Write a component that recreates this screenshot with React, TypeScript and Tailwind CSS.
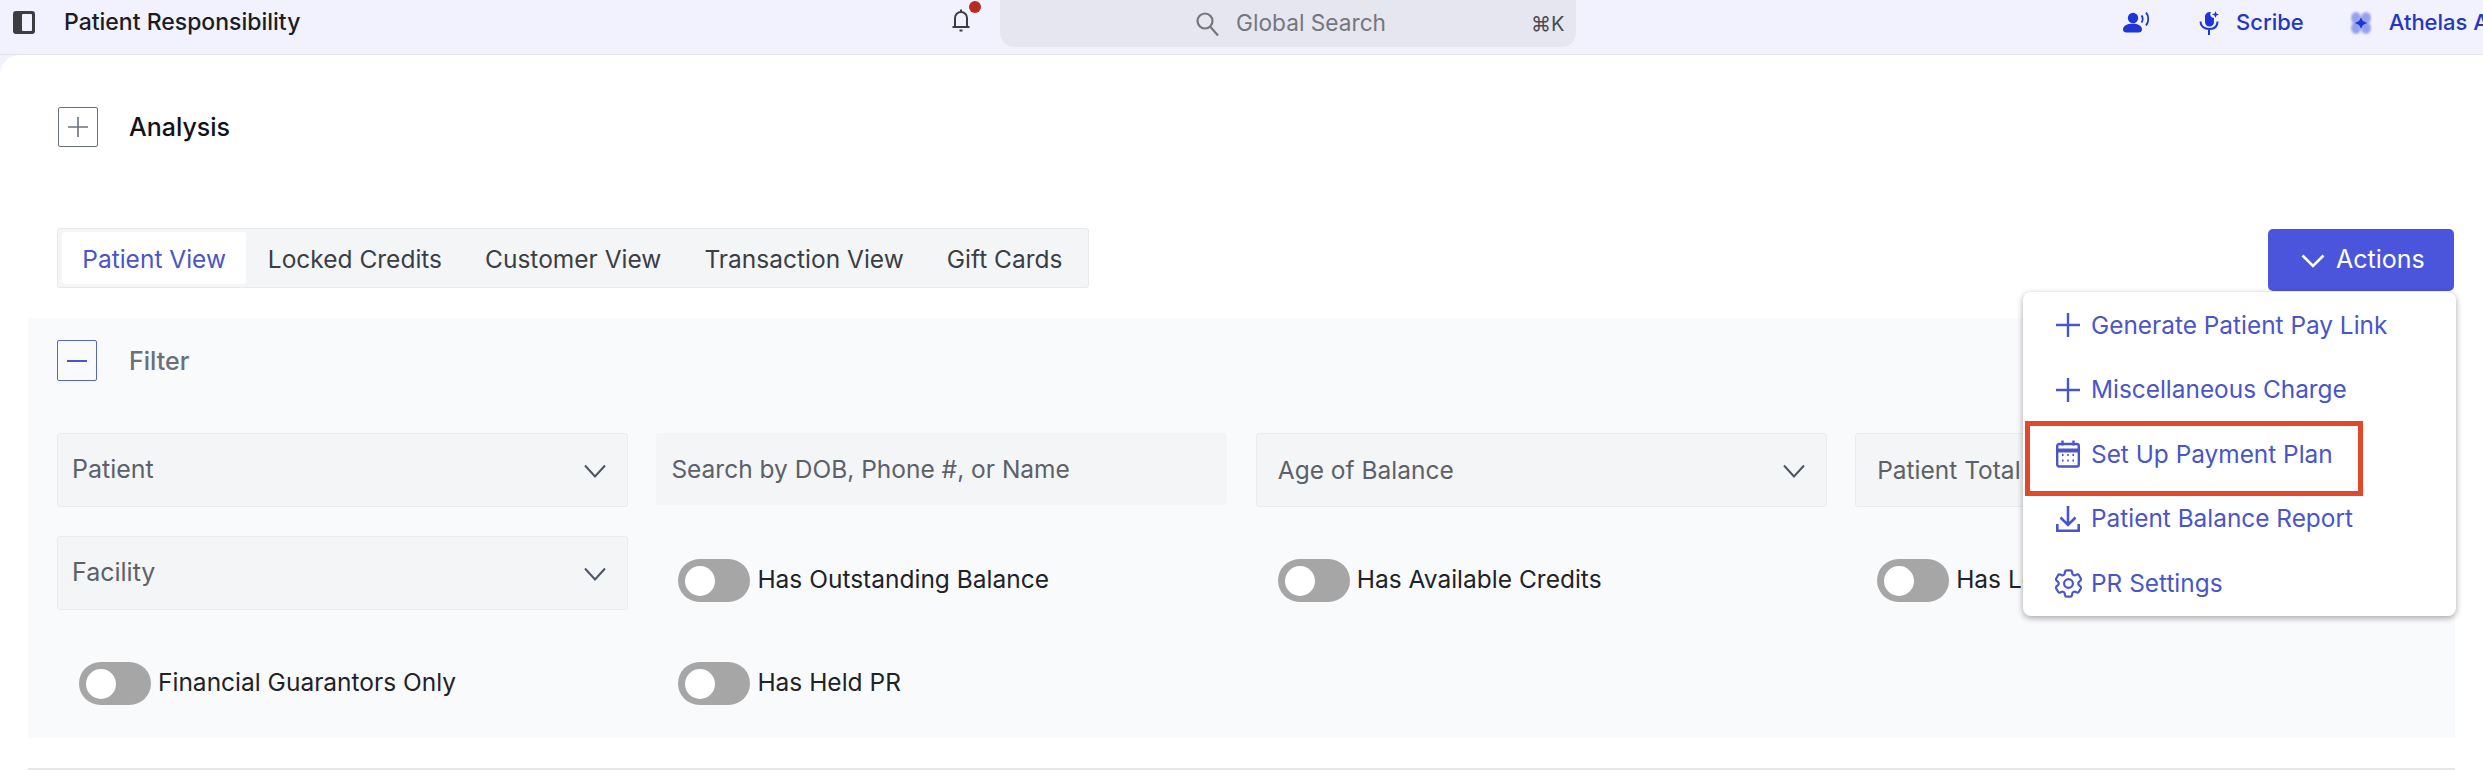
import React from "react";
import { HiOutlineCog6Tooth } from "react-icons/hi2";

const SelectBox = ({ label, first }: { label: string; first?: boolean }) => (
  <div
    className={`flex h-[74px] items-center justify-between rounded-[3px] border border-[#e9ebef] bg-[#f4f5f7] pr-[21px] text-[#5c6169] ${
      first ? "pl-[14px] text-[25px]" : "pl-[21px] text-[24.5px]"
    }`}
  >
    <span className="whitespace-nowrap">{label}</span>
    <svg width="22" height="14" viewBox="0 0 22 14" fill="none" stroke="#4b5563" strokeWidth="2" className="mt-[2px]">
      <path d="M1 1.5 11 12.5 21 1.5" />
    </svg>
  </div>
);

const Toggle = ({ label }: { label: string }) => (
  <div className="flex h-[74px] items-start pl-[22px] pt-[23px]">
    <div className="flex h-[43px] w-[72px] shrink-0 items-center rounded-full bg-[#a6a6a6] pl-[7px]">
      <div className="h-[30px] w-[30px] rounded-full bg-white" />
    </div>
    <span className="ml-[7px] mt-[2px] whitespace-nowrap text-[24.5px] leading-[36px] text-[#1f2328]">{label}</span>
  </div>
);

const PlusIcon = () => (
  <svg width="24" height="24" viewBox="0 0 24 24" fill="none" stroke="#4a55c8" strokeWidth="2.4">
    <path d="M12 0v24M0 12h24" />
  </svg>
);

const CalendarIcon = () => (
  <svg width="24" height="28" viewBox="0 0 24 28" fill="none" stroke="#4a55c8" strokeWidth="2.4">
    <rect x="1.2" y="4" width="21.6" height="22.5" rx="2" />
    <path d="M1.2 10.5h21.6" strokeWidth="4" />
    <path d="M6.5 0.5v5M17.5 0.5v5" />
    <path d="M6 15h1.6M11.2 15h1.6M16.4 15h1.6M6 20.5h1.6M11.2 20.5h1.6M16.4 20.5h1.6" strokeWidth="2" />
  </svg>
);

const DownloadIcon = () => (
  <svg width="24" height="26" viewBox="0 0 24 26" fill="none" stroke="#4a55c8" strokeWidth="2.6">
    <path d="M12 0v19M4.5 11.5 12 19l7.5-7.5" />
    <path d="M1.3 18v6.7h21.4V18" />
  </svg>
);

const menuItems = [
  { label: "Generate Patient Pay Link", icon: <PlusIcon /> },
  { label: "Miscellaneous Charge", icon: <PlusIcon /> },
  { label: "Set Up Payment Plan", icon: <CalendarIcon /> },
  { label: "Patient Balance Report", icon: <DownloadIcon /> },
  { label: "PR Settings", icon: <HiOutlineCog6Tooth size={35} color="#4a55c8" /> },
];

const tabs = ["Locked Credits", "Customer View", "Transaction View", "Gift Cards"];

export default function App() {
  return (
    <div className="h-[770px] w-[2483px] overflow-hidden bg-[#f1f2fd] font-['Inter',sans-serif]">
      <header className="flex h-[55px] items-start border-b border-[#e2e3ec]">
        <div className="flex w-[952px] shrink-0 items-center pt-[9px]">
          <div className="ml-[13px] flex h-[23px] w-[22px] justify-end rounded-[3px] bg-[#3b3d43] p-[3px]">
            <div className="h-full w-[10px] rounded-[1px] bg-[#f1f2fd]" />
          </div>
          <span className="ml-[29px] text-[23px] font-medium leading-[26px] text-[#1b1d22]">Patient Responsibility</span>
        </div>
        <div className="relative mt-[9px] w-[18px] shrink-0">
          <svg width="18" height="23" viewBox="0 0 18 23" fill="none" stroke="#3a3d44" strokeWidth="2">
            <path d="M9 0.5v3M3 17V9a6 6 0 0 1 12 0v8M0.5 18h17" />
            <path d="M7.5 21.5h3" />
          </svg>
          <div className="absolute left-[17px] top-[-8px] h-[12px] w-[12px] rounded-full bg-[#b82b22]" />
        </div>
        <div className="ml-[30px] flex h-[47px] w-[576px] shrink-0 items-center rounded-b-[14px] bg-[#e5e6f0]">
          <svg width="23" height="24" viewBox="0 0 23 24" fill="none" stroke="#75767d" strokeWidth="2.2" className="ml-[196px]">
            <circle cx="9" cy="9" r="7.5" />
            <path d="M14.5 15 22 23.5" />
          </svg>
          <span className="ml-[17px] text-[22.7px] text-[#75767d]">Global Search</span>
          <span className="ml-[145px] whitespace-nowrap text-[20px] text-[#4a4b52]">⌘K</span>
        </div>
        <div className="ml-[547px] flex shrink-0 items-center whitespace-nowrap pt-[6px] text-[22px] font-medium text-[#2437c4]">
          <svg width="27" height="21" viewBox="0 0 27 21" fill="#1f35d6">
            <circle cx="10" cy="6" r="5.2" />
            <path d="M0 17.5c0-4 4-5.8 9.5-5.8S19 13.5 19 17.5c0 2-1.4 3-3.5 3h-12C1.4 20.5 0 19.5 0 17.5z" />
            <path d="M18.5 3.5c1.6 1.6 1.6 5.4 0 7M23 0.5c3 3 3 10 0 13" fill="none" stroke="#1f35d6" strokeWidth="1.8" />
          </svg>
          <svg width="20" height="24" viewBox="0 0 20 24" fill="#1f35d6" className="ml-[49px]">
            <path d="M6 5a4.5 4.5 0 0 1 6-3.8c-1 1.4-1 3 0 4.3 1 1 2 1.5 3 1.5V11a4.5 4.5 0 0 1-9 0z" />
            <path d="M16.5 0l.9 2.6 2.6.9-2.6.9-.9 2.6-.9-2.6-2.6-.9 2.6-.9z" />
            <path d="M1.5 10.5c0 4.7 3.5 7.5 9 7.5s8-2.8 8-7.500M10 18v6" fill="none" stroke="#1f35d6" strokeWidth="2" />
          </svg>
          <span className="ml-[17px]">Scribe</span>
          <svg width="22" height="24" viewBox="0 0 22 24" className="ml-[46px]">
            <g fill="#6f80e8" opacity="0.7" className="blur-[1px]">
              <ellipse cx="6" cy="7" rx="5" ry="6" />
              <ellipse cx="16" cy="7" rx="5" ry="6" />
              <ellipse cx="6" cy="17" rx="5" ry="6" />
              <ellipse cx="16" cy="17" rx="5" ry="6" />
            </g>
            <path d="M11 6.5 13 10l4 2-4 2-2 3.500L9 14l-4-2 4-2z" fill="#1f35d6" />
          </svg>
          <span className="ml-[17px]">Athelas Assist</span>
        </div>
      </header>

      <main className="relative h-[715px] rounded-tl-[20px] bg-white">
        <div className="flex h-[173px] items-start px-[58px] pt-[52px]">
          <div className="flex h-[40px] w-[40px] items-center justify-center rounded-[2px] border border-[#6b7280]">
            <svg width="20" height="20" viewBox="0 0 20 20" fill="none" stroke="#6b7280" strokeWidth="1.6">
              <path d="M10 0v20M0 10h20" />
            </svg>
          </div>
          <span className="ml-[31px] mt-[4px] text-[25px] font-medium leading-[32px] text-[#111318]">Analysis</span>
        </div>

        <div className="flex h-[90px] items-start justify-between pl-[57px] pr-[29px]">
          <div className="flex h-[60px] w-[1032px] items-center rounded-[3px] border border-[#e7e9ec] bg-[#f4f5f7] px-[4px] text-[24.5px] text-[#3a3e45]">
            <div className="flex h-[52px] w-[186px] items-center justify-center rounded-[3px] bg-white pt-[2px] text-[#4a55c8]">Patient View</div>
            {tabs.map((t) => (
              <span key={t} className="mx-[21.5px] whitespace-nowrap pt-[2px]">{t}</span>
            ))}
          </div>
          <button className="mt-[1px] flex h-[62px] w-[186px] items-center rounded-[5px] bg-[#4a55dc] pl-[33px] text-[25px] text-white">
            <svg width="24" height="14" viewBox="0 0 24 14" fill="none" stroke="white" strokeWidth="2.6" className="mt-[2px]">
              <path d="M1.5 1.5 12 12 22.5 1.5" />
            </svg>
            <span className="ml-[11px]">Actions</span>
          </button>
        </div>

        <section className="mx-[28px] h-[420px] w-[2427px] bg-[#f9fafc] px-[29px] pt-[22px]">
          <div className="flex h-[41px] items-center">
            <div className="flex h-[41px] w-[40px] items-center justify-center rounded-[2px] border-[1.5px] border-[#5a64c4]">
              <div className="h-[2px] w-[20px] bg-[#4a55c8]" />
            </div>
            <span className="ml-[32px] mt-[2px] text-[25px] font-medium text-[#6b7078]">Filter</span>
          </div>
          <div className="mt-[52px] grid w-[2369px] grid-cols-4 gap-x-[28.5px] gap-y-[29px]">
            <SelectBox label="Patient" first />
            <div className="flex h-[72px] items-center rounded-[3px] bg-[#f4f5f7] pl-[15px] text-[24.5px] text-[#5c6169]">Search by DOB, Phone #, or Name</div>
            <SelectBox label="Age of Balance" />
            <SelectBox label="Patient Total" />
            <SelectBox label="Facility" first />
            <Toggle label="Has Outstanding Balance" />
            <Toggle label="Has Available Credits" />
            <Toggle label="Has Locked Credits" />
            <Toggle label="Financial Guarantors Only" />
            <Toggle label="Has Held PR" />
          </div>
        </section>
        <div className="mx-[28px] mt-[30px] h-[2px] w-[2427px] bg-[#e5e7eb]" />

        {/* open Actions menu */}
        <div className="absolute left-[2023px] top-[237px] h-[324px] w-[433px] rounded-[8px] bg-white pt-[1px] shadow-[0_2px_6px_rgba(0,0,0,0.35)]">
          {menuItems.map((m) => (
            <div key={m.label} className="flex h-[64.5px] items-center text-[24.4px] text-[#4a55c8]">
              <div className="flex w-[68px] shrink-0 justify-center pl-[22px]">{m.icon}</div>
              <span className="whitespace-nowrap">{m.label}</span>
            </div>
          ))}
          {/* annotation box from the screenshot */}
          <div className="absolute left-[2px] top-[129px] h-[75px] w-[338px] border-[5px] border-[#e2492b]" />
        </div>
      </main>
    </div>
  );
}
